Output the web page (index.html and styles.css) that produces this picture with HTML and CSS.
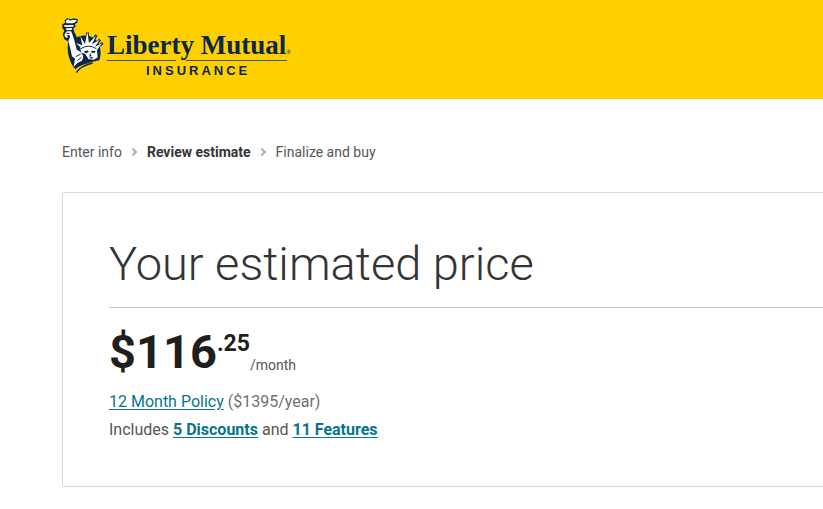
FILE: index.html
```html
<!DOCTYPE html>
<html lang="en">
  <head>
    <meta charset="utf-8" />
    <meta name="viewport" content="width=device-width, initial-scale=1" />
    <title>Your estimated price | Liberty Mutual</title>
    <link rel="stylesheet" href="styles.css">
  </head>
  <body>
    <header class="header">
      <a href="#" class="logo" aria-label="Liberty Mutual Insurance">
        <svg class="statue" viewBox="21 24 126 168" aria-hidden="true">
          <!-- shield -->
          <path fill="#0c2749" d="M40 92 C34 122 42 156 61 178 C78 163 107 157 133 151 C139 132 138 117 130 99 C118 78 92 70 66 82Z" />
          <path fill="none" stroke="#0c2749" stroke-width="4" d="M64 188 C73 172 92 164 113 159" />
          <!-- torch and arm -->
          <path fill="#0c2749" d="M22 43 L31 38 L28 32 L36 25 L48 28 L56 25 L69 28 L67 38 L60 42 L62 50 L55 55 L58 66 L66 82 L63 110 L48 115 L38 94 L28 88 L23 73 L28 62 L22 54Z" />
          <path fill="#fff" d="M35 40 C30 35 32 30 40 28 C44 33 49 32 54 29 L66 31 C62 38 55 41 48 40Z" />
          <path fill="#fff" d="M27 46 L56 45 L55 50 L29 51Z M32 55 L51 54 L50 60 L35 61Z" />
          <path fill="#fff" d="M31 69 L36 64 L48 64 L52 73 L59 94 L65 119 L76 125 L86 139 L81 152 L67 159 L56 171 L60 146 L51 139 L46 116 L40 93 L45 81 L43 75 L37 75 L38 84 L31 82 L28 75Z" />
          <path fill="none" stroke="#0c2749" stroke-width="3" d="M34 70 H44 M62 140 L77 132 M67 152 L79 142" />
          <!-- crown rays, drawn dark first so they show past the shield -->
          <path fill="none" stroke="#0c2749" stroke-width="8" d="M64 100 L84 112 M77 82 L90 106 M97 67 L100 102 M124 75 L108 104 M135 89 L117 110 M143 99 L123 116" />
          <path fill="#fff" d="M76 112 L63 99 L82 106 L76 79 L90 102 L97 65 L102 99 L123 77 L111 103 L134 89 L120 110 L141 100 L126 120 L128 142 L117 149 L101 148 L94 137 L78 127Z" />
          <path fill="none" stroke="#0c2749" stroke-width="3" d="M78 116 Q100 101 124 116" />
          <path fill="#0c2749" d="M85 125 L98 121 L102 125 L93 130Z M109 122 L122 123 L118 129 L109 128Z M105 128 L110 139 L103 140Z M101 143 L115 141 L110 147Z M83 129 L91 132 L94 140 L99 148 L92 150 L84 141Z" />
        </svg>
        <span class="wordmark">
          <span class="brand">Liberty Mutual<span class="mark">®</span></span>
          <svg class="brand-rule" viewBox="0 0 180 1" aria-hidden="true">
            <path fill="#4d551c" d="M0 0H69V1H0Z M79 0H180V1H79Z" />
          </svg>
          <span class="insurance">INSURANCE</span>
        </span>
      </a>
    </header>

    <main class="page">
      <nav aria-label="Progress">
        <ol class="steps">
          <li>Enter info</li>
          <li class="current" aria-current="step">Review estimate</li>
          <li>Finalize and buy</li>
        </ol>
      </nav>

      <section class="estimate">
        <h1>Your estimated price</h1>
        <div class="price">
          <span class="dollars">$116</span>
          <span class="cents">.25</span>
          <span class="period">/month</span>
        </div>
        <p class="policy"><a href="#">12 Month Policy</a> ($1395/year)</p>
        <p class="includes">
          Includes <a href="#">5 Discounts</a> and <a href="#">11 Features</a>
        </p>
      </section>
    </main>
  </body>
</html>
```

FILE: styles.css
```css
* {
  box-sizing: border-box;
}

body {
  margin: 0;
  font-family: Roboto, Arial, sans-serif;
  font-size: 16px;
  line-height: 28px;
  color: #565656;
  background-color: #fff;
}

.header {
  display: flex;
  padding: 18px 62px 21px;
  background-color: #ffd000;
}

.logo {
  display: flex;
  gap: 3px;
  height: 60px;
  color: #0c2749;
  text-decoration: none;
}

.statue {
  flex-shrink: 0;
  width: 42px;
  height: 56px;
}

.wordmark {
  display: flex;
  flex-direction: column;
  padding-top: 12px;
}

.brand {
  font-family: "Liberation Serif", serif;
  font-size: 27px;
  font-weight: bold;
  line-height: 30px;
  white-space: nowrap;
}

.mark {
  font-size: 6px;
  line-height: 6px;
}

.brand-rule {
  flex-shrink: 0;
  width: 180px;
  height: 1px;
}

.insurance {
  padding-left: 39px;
  font-family: "Liberation Sans", Arial, sans-serif;
  font-size: 13px;
  font-weight: bold;
  line-height: 20px;
  letter-spacing: 3px;
}

.page {
  padding: 39px 0 22px 62px;
}

.steps {
  display: flex;
  margin: 0;
  padding: 0;
  list-style: none;
  font-size: 14px;
}

.steps li {
  display: flex;
  align-items: center;
}

.steps li + li::before {
  content: "";
  width: 4px;
  height: 4px;
  margin: 0 11px 0 8px;
  border-top: 2px solid #b4b4b4;
  border-right: 2px solid #b4b4b4;
  transform: rotate(45deg);
}

.steps .current {
  font-weight: bold;
  color: #343434;
}

/* the panel runs off the right side of the window */
.estimate {
  margin-top: 26px;
  padding: 40px 0 42px 46px;
  border: 1px solid #d8d8d8;
  border-right: 0;
  border-radius: 2px 0 0 2px;
}

h1 {
  margin: 0;
  padding-bottom: 12px;
  border-bottom: 1px solid #c0c0c0;
  font-size: 47px;
  font-weight: 300;
  line-height: 62px;
  color: #343434;
}

.price {
  display: flex;
  align-items: flex-start;
  padding: 16px 0 8px;
  color: #1f1f1f;
}

.dollars {
  font-size: 47px;
  font-weight: bold;
  line-height: 56px;
}

.cents {
  font-size: 23px;
  font-weight: bold;
  line-height: 40px;
}

.period {
  align-self: flex-end;
  font-size: 14px;
  line-height: 30px;
  color: #565656;
}

p {
  margin: 0;
}

a {
  color: #06748c;
  text-underline-offset: 2px;
}

.policy {
  color: #707070;
}

.includes a {
  font-weight: bold;
}
```
